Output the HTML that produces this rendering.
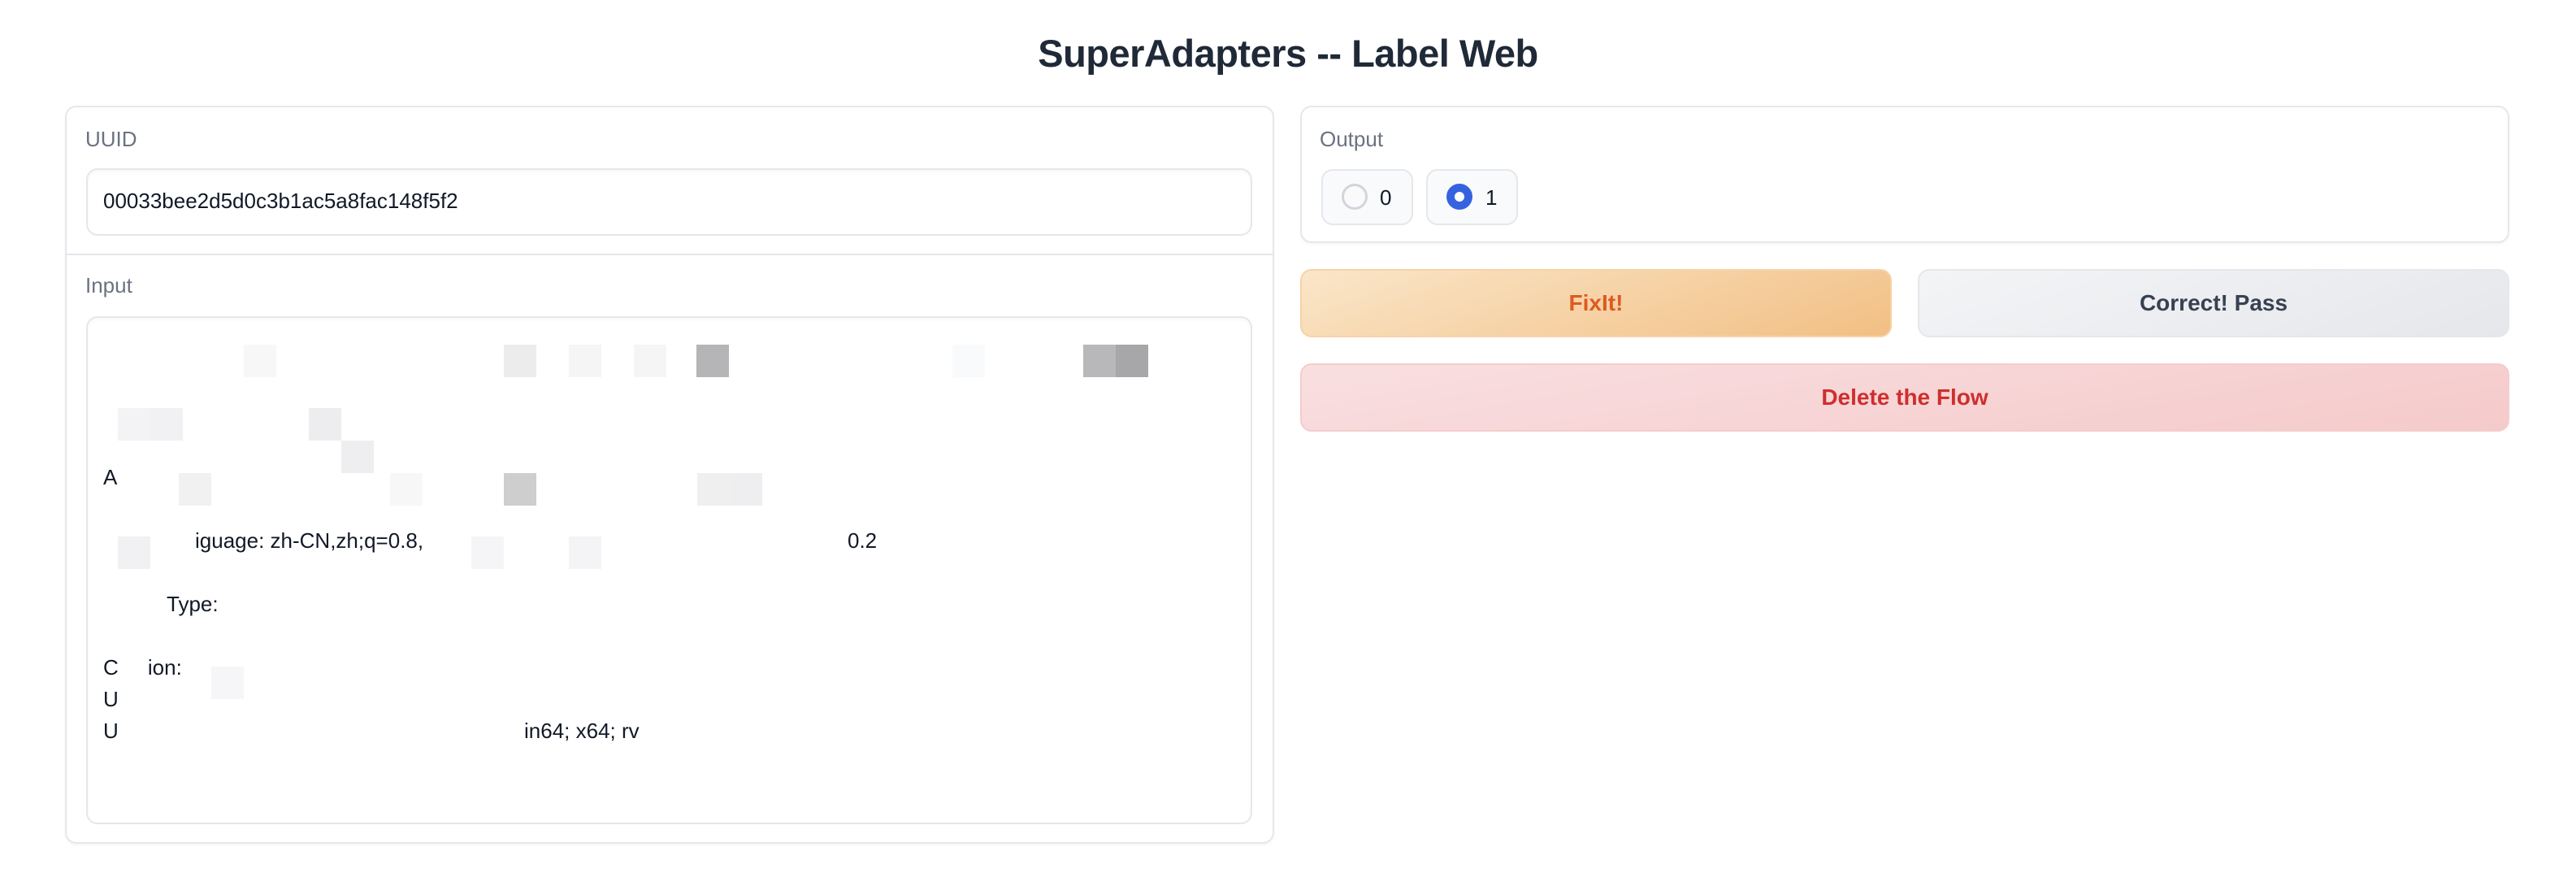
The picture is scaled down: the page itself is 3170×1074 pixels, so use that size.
<!DOCTYPE html>
<html><head><meta charset="utf-8"><style>
*{box-sizing:border-box;margin:0;padding:0}
body{width:3170px;height:1074px;background:#fff;font-family:"Liberation Sans",sans-serif;position:relative;overflow:hidden;color:#1f2937}
.abs{position:absolute}
h1{position:absolute;left:0;width:3170px;top:38px;text-align:center;font-size:47px;font-weight:bold;color:#1f2937;letter-spacing:-0.5px}
.panel{position:absolute;border:2px solid #e5e7eb;border-radius:14px;background:#fff;box-shadow:0 2px 3px rgba(0,0,0,.04)}
.lab{position:absolute;font-size:26px;color:#6b7280}
.box{position:absolute;border:2px solid #e5e7eb;border-radius:14px;background:#fff;box-shadow:inset 0 2px 4px rgba(0,0,0,.04)}
.t{position:absolute;font-size:26px;color:#111827;white-space:nowrap}
.b{position:absolute;width:40px;height:40px}
.btn{position:absolute;border-radius:14px;font-size:28px;font-weight:bold;display:flex;align-items:center;justify-content:center}
.radio{position:absolute;border:2px solid #e5e7eb;border-radius:14px;background:#f9fafb;top:208px;width:113px;height:69px}
</style></head><body>
<h1>SuperAdapters -- Label Web</h1>

<div class="panel" style="left:80px;top:130px;width:1488px;height:908px"></div>
<div class="abs" style="left:81px;top:312px;width:1486px;height:2px;background:#e5e7eb"></div>
<div class="lab" style="left:105px;top:156px">UUID</div>
<div class="box" style="left:106px;top:207px;width:1435px;height:83px"></div>
<div class="t" style="left:127px;top:232px">00033bee2d5d0c3b1ac5a8fac148f5f2</div>
<div class="lab" style="left:105px;top:336px">Input</div>
<div class="box" style="left:106px;top:389px;width:1435px;height:625px"></div>

<div class="b" style="left:857px;top:424px;background:#b5b5b7"></div>
<div class="b" style="left:1333px;top:424px;background:#b8b8ba"></div>
<div class="b" style="left:1373px;top:424px;background:#a7a7aa"></div>
<div class="b" style="left:620px;top:424px;background:#ebeceb"></div>
<div class="b" style="left:700px;top:424px;background:#f4f5f4"></div>
<div class="b" style="left:780px;top:424px;background:#f4f5f4"></div>
<div class="b" style="left:300px;top:424px;background:#f6f7f6"></div>
<div class="b" style="left:1172px;top:424px;background:#f9fafb"></div>
<div class="b" style="left:145px;top:502px;background:#f3f3f5"></div>
<div class="b" style="left:185px;top:502px;background:#f1f1f3"></div>
<div class="b" style="left:380px;top:502px;background:#ededef"></div>
<div class="b" style="left:420px;top:542px;background:#eeeef0"></div>
<div class="b" style="left:220px;top:582px;background:#f1f1f1"></div>
<div class="b" style="left:620px;top:582px;background:#cececf"></div>
<div class="b" style="left:858px;top:582px;background:#efefef"></div>
<div class="b" style="left:898px;top:582px;background:#eeeef0"></div>
<div class="b" style="left:480px;top:582px;background:#f6f7f6"></div>
<div class="b" style="left:145px;top:660px;background:#f1f1f3"></div>
<div class="b" style="left:580px;top:660px;background:#f5f5f7"></div>
<div class="b" style="left:700px;top:660px;background:#f4f4f6"></div>
<div class="b" style="left:260px;top:820px;background:#f6f6f8"></div>

<div class="t" style="left:127px;top:572px">A</div>
<div class="t" style="left:240px;top:650px">iguage: zh-CN,zh;q=0.8,</div>
<div class="t" style="left:1043px;top:650px">0.2</div>
<div class="t" style="left:205px;top:728px">Type: </div>
<div class="t" style="left:127px;top:806px">C&nbsp;&nbsp;&nbsp;&nbsp;&nbsp;ion:</div>
<div class="t" style="left:127px;top:845px">U</div>
<div class="t" style="left:127px;top:884px">U</div>
<div class="t" style="left:645px;top:884px">in64; x64; rv</div>

<div class="panel" style="left:1600px;top:130px;width:1488px;height:169px"></div>
<div class="lab" style="left:1624px;top:156px">Output</div>
<div class="radio" style="left:1626px"></div>
<div class="abs" style="left:1651px;top:226px;width:32px;height:32px;border:3px solid #d1d5db;border-radius:50%;background:#fafafa"></div>
<div class="t" style="left:1698px;top:228px">0</div>
<div class="radio" style="left:1755px"></div>
<div class="abs" style="left:1780px;top:226px;width:32px;height:32px;border:10px solid #3563e0;border-radius:50%;background:#fff"></div>
<div class="t" style="left:1828px;top:228px">1</div>

<div class="btn" style="left:1600px;top:331px;width:728px;height:84px;background:linear-gradient(160deg,#fae6c9,#f2bf84);border:2px solid #f6d3a5;color:#dd5b20">FixIt!</div>
<div class="btn" style="left:2360px;top:331px;width:728px;height:84px;background:linear-gradient(160deg,#f3f4f6,#e5e7eb);border:2px solid #e5e7eb;color:#374151">Correct! Pass</div>
<div class="btn" style="left:1600px;top:447px;width:1488px;height:84px;background:linear-gradient(170deg,#f9dfe1,#f5caca);border:2px solid #f4cccc;color:#cf2e2e">Delete the Flow</div>
</body></html>
